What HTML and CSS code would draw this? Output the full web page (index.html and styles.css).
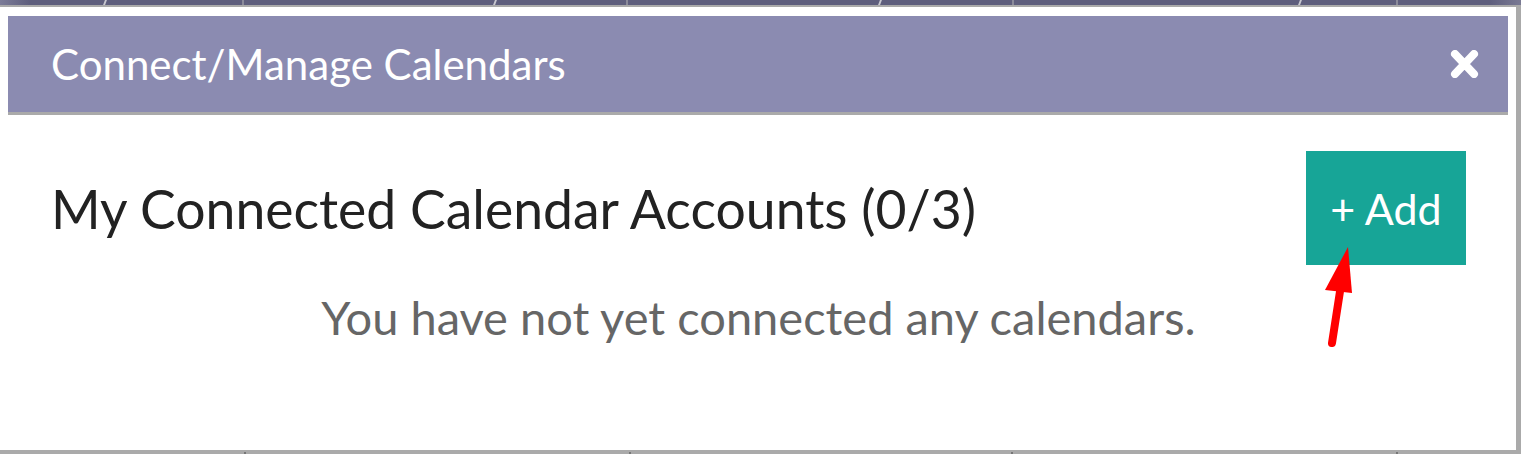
FILE: index.html
```html
<!DOCTYPE html>
<html lang="en">
<head>
    <meta charset="UTF-8">
    <meta name="viewport" content="width=device-width, initial-scale=1.0">
    <title>Connect/Manage Calendars</title>
    <link rel="stylesheet" href="styles.css">
</head>
<body>
    <div class="backdrop-strip">
        <span class="tick tick-1"></span>
        <span class="sep sep-1"></span>
        <span class="tick tick-2"></span>
        <span class="sep sep-2"></span>
        <span class="tick tick-3"></span>
        <span class="sep sep-3"></span>
        <span class="tick tick-4"></span>
        <span class="sep sep-4"></span>
    </div>

    <div class="modal">
        <div class="modal-header">
            <h2>Connect/Manage Calendars</h2>
            <button class="close-btn" aria-label="Close">
                <svg width="29" height="28" viewBox="0 0 29 28">
                    <path d="M5 4 L24 24 M24 4 L5 24" stroke="#fff" stroke-width="8" stroke-linecap="round"/>
                </svg>
            </button>
        </div>

        <div class="modal-body">
            <div class="accounts-row">
                <h3>My Connected Calendar Accounts (0/3)</h3>
                <button class="add-btn">+ Add</button>
            </div>
            <p class="empty-msg">You have not yet connected any calendars.</p>

            <!-- annotation arrow pointing at the add button -->
            <svg class="arrow" width="40" height="100" viewBox="0 0 40 100">
                <line x1="12" y1="96" x2="21" y2="38" stroke="#f00" stroke-width="8" stroke-linecap="round"/>
                <polygon points="28,0 5,43 32,46" fill="#f00"/>
            </svg>
        </div>
    </div>

    <div class="bottom-strip">
        <span class="mark mark-1"></span>
        <span class="mark mark-2"></span>
        <span class="mark mark-3"></span>
        <span class="mark mark-4"></span>
    </div>
</body>
</html>
```

FILE: styles.css
```css
body {
    margin: 0;
    background-color: #aaaaaa;
    font-family: Lato, "Open Sans", Arial, sans-serif;
    width: 1521px;
    height: 454px;
    overflow: hidden;
}
.backdrop-strip {
    position: relative;
    height: 5px;
    background: linear-gradient(to right, #7c7c98 0, #5e5e7d 30px, #5e5e7d 1490px, #7a7a94 100%);
    border-bottom: 2px solid #aaaaaa;
}
.sep {
    position: absolute;
    top: 0;
    width: 2px;
    height: 5px;
    background-color: #8a8a9a;
}
.sep-1 { left: 242px; }
.sep-2 { left: 626px; }
.sep-3 { left: 1012px; }
.sep-4 { left: 1396px; }
.tick {
    position: absolute;
    top: 0;
    width: 2px;
    height: 5px;
    background-color: #c8c8d0;
    transform: skewX(-20deg);
}
.tick-1 { left: 104px; }
.tick-2 { left: 494px; }
.tick-3 { left: 879px; }
.tick-4 { left: 1299px; }
.modal {
    position: relative;
    width: 1516px;
    height: 443px;
    background-color: #ffffff;
    padding: 9px 8px 0 8px;
    box-sizing: border-box;
}
.modal-header {
    display: flex;
    align-items: center;
    justify-content: space-between;
    height: 96px;
    padding: 0 29px 0 43px;
    background-color: #8b8bb1;
    border-bottom: 3px solid #aaaaaa;
}
.modal-header h2 {
    margin: 0;
    color: #ffffff;
    font-size: 42px;
    font-weight: normal;
}
.close-btn {
    background: none;
    border: none;
    padding: 0;
    display: flex;
}
.modal-body {
    padding: 36px 42px 0 43px;
}
.accounts-row {
    display: flex;
    align-items: center;
    justify-content: space-between;
}
.accounts-row h3 {
    margin: 0;
    color: #222222;
    font-size: 53.5px;
    font-weight: normal;
}
.add-btn {
    width: 160px;
    height: 114px;
    background-color: #17a597;
    color: #ffffff;
    border: none;
    font-family: inherit;
    font-size: 43px;
}
.empty-msg {
    margin: 24px 0 0 0;
    text-align: center;
    color: #666666;
    font-size: 47px;
}
.arrow {
    position: absolute;
    left: 1320px;
    top: 240px;
}
.bottom-strip {
    position: relative;
    height: 4px;
}
.mark {
    position: absolute;
    bottom: 0;
    width: 2px;
    height: 2px;
    background-color: #777777;
}
.mark-1 { left: 244px; }
.mark-2 { left: 629px; }
.mark-3 { left: 1011px; }
.mark-4 { left: 1396px; }
```
